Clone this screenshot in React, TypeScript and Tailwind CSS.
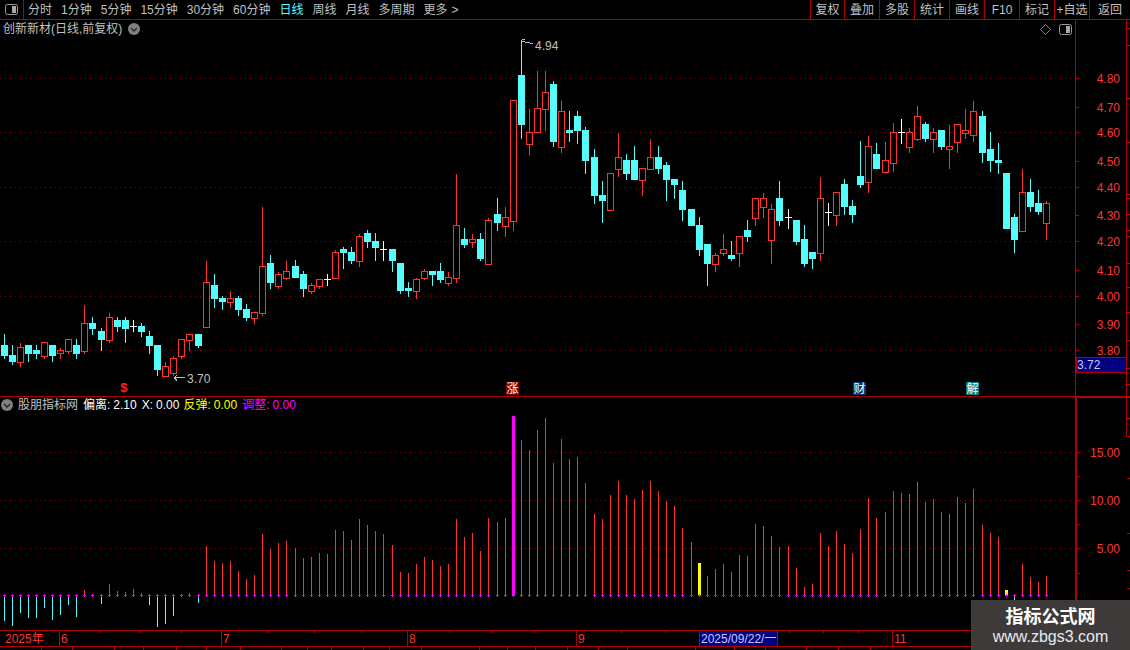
const RED = '#ff3232';
const LINE = '#b00000';
const CYAN = '#55fcfc';

const JUMPS = [12, 24, 36, 48, 61, 73, 85, 97, 109, 121];
const barX = (i: number) => 4 + 8 * i + JUMPS.filter((j) => j <= i).length;

type Candle = [string, number, number, number, number];

// read from 3x crops: kind, wick top, body top, body bottom, wick bottom
const rows: { base: number; data: Candle[] }[] = [
  {
    base: 200,
    data: [
      ['c', 402, 435, 465, 473], ['c', 435, 465, 483, 492], ['r', 430, 441, 485, 498], ['c', 435, 435, 459, 483],
      ['c', 435, 450, 459, 474], ['r', 426, 426, 468, 474], ['c', 435, 435, 465, 483], ['r', 444, 450, 460, 474],
      ['r', 417, 417, 452, 458], ['c', 417, 435, 459, 474], ['r', 315, 369, 453, 459], ['c', 351, 369, 384, 402],
      ['c', 384, 393, 417, 450], ['r', 339, 351, 420, 426], ['c', 351, 360, 378, 393], ['c', 351, 360, 384, 426],
      ['w', 360, 378, 378, 393], ['c', 369, 378, 393, 408], ['c', 393, 408, 435, 459], ['c', 435, 435, 507, 525],
      ['r', 486, 498, 528, 528], ['r', 468, 474, 519, 525], ['r', 417, 417, 468, 474], ['r', 402, 402, 420, 450],
      ['c', 402, 402, 435, 441], ['r', 183, 246, 381, 381], ['c', 222, 255, 294, 321], ['c', 288, 294, 303, 327],
      ['r', 273, 294, 306, 321], ['c', 288, 294, 327, 345], ['c', 312, 327, 351, 360], ['r', 336, 336, 354, 369],
      ['r', 21, 198, 339, 345], ['c', 165, 189, 246, 264], ['r', 216, 222, 258, 264],
    ],
  },
  {
    base: 120,
    data: [
      ['r', 423, 453, 474, 477], ['c', 420, 438, 471, 471], ['c', 453, 462, 504, 528], ['r', 489, 495, 513, 519],
      ['r', 477, 477, 498, 504], ['w', 462, 477, 477, 495], ['r', 390, 396, 474, 474], ['c', 381, 387, 396, 444],
      ['c', 381, 396, 420, 429], ['r', 342, 348, 423, 438], ['c', 330, 339, 363, 381], ['c', 339, 363, 381, 420],
      ['w', 363, 387, 387, 420], ['c', 387, 387, 420, 453], ['c', 429, 429, 510, 519], ['c', 486, 504, 510, 528],
      ['r', 474, 477, 513, 534], ['r', 447, 453, 474, 477], ['c', 453, 453, 462, 495], ['c', 429, 453, 477, 486],
      ['r', 456, 471, 489, 495], ['r', 162, 315, 474, 486], ['c', 324, 357, 372, 381], ['r', 342, 357, 366, 381],
      ['c', 339, 357, 414, 420], ['r', 294, 300, 432, 432], ['c', 234, 282, 306, 330], ['r', 261, 291, 318, 348],
    ],
  },
  {
    base: 30,
    data: [
      ['r', 211, 211, 573, 600], ['c', 30, 135, 282, 324], ['r', 237, 306, 342, 372], ['r', 123, 234, 307, 307],
      ['r', 123, 186, 237, 300], ['c', 153, 162, 333, 348], ['r', 213, 243, 351, 366], ['c', 243, 300, 306, 333],
      ['c', 243, 258, 300, 339], ['c', 291, 300, 390, 429], ['c', 357, 381, 495, 519], ['c', 453, 495, 510, 576],
      ['r', 429, 429, 540, 540], ['r', 309, 381, 417, 438], ['c', 372, 390, 429, 447], ['c', 348, 390, 447, 447],
      ['r', 414, 414, 450, 495], ['r', 327, 381, 417, 417], ['c', 348, 381, 414, 429], ['c', 396, 405, 447, 510],
      ['c', 447, 447, 462, 504], ['c', 453, 480, 537, 570], ['c', 537, 537, 585, 585], ['c', 561, 585, 657, 675],
      ['c', 642, 642, 699, 765], ['r', 669, 675, 702, 723], ['r', 612, 657, 668, 675], ['c', 633, 675, 684, 690],
      ['r', 618, 618, 668, 708], ['c', 570, 600, 618, 633], ['r', 504, 504, 564, 585], ['r', 489, 504, 531, 561],
      ['r', 522, 537, 630, 699], ['c', 453, 504, 570, 585],
    ],
  },
  {
    base: 90,
    data: [
      ['w', 357, 381, 381, 414], ['c', 390, 390, 453, 462], ['c', 405, 447, 519, 528], ['c', 486, 486, 504, 534],
      ['r', 261, 324, 488, 510], ['w', 339, 365, 365, 405], ['r', 306, 306, 375, 405], ['c', 267, 282, 348, 372],
      ['c', 330, 348, 372, 396], ['c', 153, 258, 282, 291], ['r', 138, 168, 275, 306], ['c', 159, 192, 234, 234],
      ['r', 156, 210, 246, 246], ['r', 99, 126, 218, 243], ['w', 87, 127, 127, 159], ['r', 114, 126, 170, 186],
      ['r', 48, 78, 147, 150], ['c', 96, 102, 144, 153], ['r', 114, 126, 147, 186], ['c', 120, 120, 168, 177],
      ['r', 105, 168, 178, 234], ['r', 102, 102, 156, 186], ['r', 57, 120, 129, 144], ['r', 33, 63, 136, 153],
      ['c', 63, 78, 186, 216], ['c', 126, 177, 210, 243], ['c', 159, 210, 216, 249], ['c', 249, 249, 414, 414],
      ['c', 372, 381, 447, 486], ['r', 237, 306, 422, 423], ['c', 267, 306, 348, 363], ['c', 300, 339, 363, 372],
      ['r', 333, 339, 399, 447],
    ],
  },
];

const candles = rows.flatMap(({ base, data }) =>
  data.map(([kind, a, b, c, d]) => ({
    kind,
    wickTop: Math.round(base + a / 3),
    top: Math.round(base + b / 3),
    bottom: Math.round(base + c / 3),
    wickBottom: Math.round(base + d / 3),
  })),
);

// indicator: y of each bar's tip, 0 = no bar
const tipZ = [
  720, 735, 696, 711, 711, 681, 717, 702, 672, 708, 630, 0, 669, 612, 633, 636, 627, 639, 672, 738, 729, 705, 0, 640,
  666, 498, 543, 549, 543, 573, 597, 585, 462, 507, 489, 483, 504, 534, 531, 519, 522, 450, 453,
  480, 417, 435, 453, 462, 495, 576, 579, 552, 531, 540, 558, 552, 417, 471, 459, 513, 414, 426, 414, 108, 180, 210,
  150, 114, 249, 177, 237, 231, 309, 402, 417, 345, 303, 345, 357, 330, 303, 333, 363, 378, 444, 486, 549, 588, 567,
  552, 576, 525, 528,
];
const tipZ2 = [
  552, 558, 588, 621, 618, 684, 741, 732, 579, 618, 573, 612, 639, 567, 474, 534, 516, 453, 459, 462, 426, 486, 477,
  516, 522, 471, 489, 447, 555, 579, 591, 750, 800, 672, 711, 726, 708,
];
const BASE = 595;
const tips = [...tipZ.map((z) => (z ? Math.round(380 + z / 3) : BASE)), ...tipZ2.map((z) => Math.round(340 + z / 3))];

const priceGrid = [78, 132, 187, 241, 296, 350];
const priceLabels: [string, number][] = [
  ['4.80', 78], ['4.70', 107], ['4.60', 132], ['4.50', 161], ['4.40', 187], ['4.30', 215],
  ['4.20', 241], ['4.10', 270], ['4.00', 296], ['3.90', 324], ['3.80', 350],
];
const sideTicks = [28, 45, 98, 142, 194, 198, 214, 230, 236, 263, 287, 312, 340, 368, 384];
const volLabels: [string, number][] = [['15.00', 452], ['10.00', 500], ['5.00', 548]];
const volTicks = [476, 524, 573];
const volSideTicks = [478, 533, 570, 588, 612];

const leftTabs = ['分时', '1分钟', '5分钟', '15分钟', '30分钟', '60分钟', '日线', '周线', '月线', '多周期'];
const rightTabs: [string, string][] = [
  ['复权', 'w-[34px]'], ['叠加', 'w-[35px]'], ['多股', 'w-[35px]'], ['统计', 'w-[35px]'], ['画线', 'w-[35px]'],
  ['F10', 'w-[35px]'], ['标记', 'w-[35px]'], ['+自选', 'w-[35px]'], ['返回', 'w-[41px]'],
];
const timeTicks = [100, 140, 181, 268, 314, 361, 449, 492, 534, 621, 665, 789, 823, 858];
const tabEdges = [42, 73, 115, 144, 177, 207, 241, 282, 308, 332, 364, 390, 422, 480, 508, 536, 568, 599, 628, 696, 735, 766, 807, 839, 871, 1130];

const PanelIcon = () => (
  <svg width="13" height="11" viewBox="0 0 13 11">
    <rect x="0.5" y="0.5" width="12" height="10" rx="2" fill="none" stroke="#9a9a9a" />
    <rect x="7" y="2" width="4" height="7" fill="#a8a8a8" />
  </svg>
);

const Chevron = () => (
  <svg width="12" height="12" viewBox="0 0 12 12">
    <circle cx="6" cy="6" r="6" fill="#808080" />
    <path d="M3 5l3 3 3-3" fill="none" stroke="#222" strokeWidth="1.3" />
  </svg>
);

const Grid = ({ ys }: { ys: number[] }) => (
  <>
    {ys.map((y) => (
      <line key={y} x1="0" x2="1075" y1={y + 0.5} y2={y + 0.5} stroke="#900000" strokeDasharray="1 4" />
    ))}
  </>
);

const Marker = ({ label, bg, left }: { label: string; bg: string; left: string }) => (
  <span className={`absolute bottom-[1px] flex h-[13px] w-[13px] items-center justify-center text-[12px] leading-none text-white ${bg} ${left}`}>
    {label}
  </span>
);

const PriceChart = () => (
  <svg width="1075" height="358" viewBox="0 38 1075 358" shapeRendering="crispEdges" fontSize="12">
    <Grid ys={priceGrid} />
    {candles.map((c, i) => {
      const x = barX(i);
      const color = c.kind === 'c' ? CYAN : c.kind === 'r' ? RED : '#ffffff';
      return (
        <g key={i}>
          <rect x={x} y={c.wickTop} width="1" height={c.wickBottom - c.wickTop + 1} fill={color} />
          {c.kind === 'c' && <rect x={x - 3} y={c.top} width="7" height={c.bottom - c.top + 1} fill={color} />}
          {c.kind === 'r' && (
            <rect x={x - 2.5} y={c.top + 0.5} width="6" height={c.bottom - c.top} fill="#000" stroke={color} />
          )}
          {c.kind === 'w' && <rect x={x - 3} y={c.top} width="7" height="1" fill={color} />}
        </g>
      );
    })}
    <g fill="#c0c0c0">
      <path d="M521.5 39.5h3M521.5 39.5v5M521.5 41.5h3M525 42h3l2 1h3" fill="none" stroke="#c0c0c0" />
      <text x="535" y="50">4.94</text>
      <path d="M174 377.5h11M174 377.5l3-2M174 377.5l3 3" fill="none" stroke="#c0c0c0" />
      <text x="187" y="383">3.70</text>
    </g>
  </svg>
);

const IndicatorChart = () => (
  <svg width="1075" height="217" viewBox="0 413 1075 217" shapeRendering="crispEdges">
    <Grid ys={[452, 500, 548]} />
    {tips.map((tip, i) => {
      const x = barX(i);
      const thick = i === 63 || i === 86 || i === 124;
      const fill = i === 63 ? '#ff00ff' : thick ? '#ffff00' : tip > BASE ? CYAN : RED;
      const top = Math.min(tip, BASE);
      const h = Math.abs(tip - BASE) + 1;
      return (
        <g key={i}>
          <rect x={thick ? x - 1 : x} y={top} width={thick ? 3 : 1} height={h} fill={fill} />
          <rect x={x - 1} y={BASE} width="3" height="1" fill="#ff00ff" />
          <rect x={x} y={BASE - 1} width="1" height="3" fill="#ff00ff" />
        </g>
      );
    })}
  </svg>
);

export default function App() {
  return (
    <div className="relative flex h-[650px] w-[1130px] flex-col overflow-hidden bg-black text-[12px] leading-none text-[#c0c0c0] font-['Liberation_Sans','Noto_Sans_CJK_SC',sans-serif]">
      {/* toolbar */}
      <div className="flex h-[20px] shrink-0 items-stretch border-b border-[#b00000]">
        <div className="flex w-[24px] items-center justify-center border-r border-[#b00000]">
          <PanelIcon />
        </div>
        <div className="flex items-center gap-[9px] pl-[4px]">
          {leftTabs.map((t) => (
            <span key={t} className={t === '日线' ? 'text-[#55ffff]' : ''}>{t}</span>
          ))}
          <span className="flex gap-[4px]">更多<span>&gt;</span></span>
        </div>
        <div className="ml-auto flex">
          {rightTabs.map(([t, w]) => (
            <div key={t} className={`flex items-center justify-center border-l border-[#b00000] ${w}`}>{t}</div>
          ))}
        </div>
      </div>

      {/* price panel */}
      <div className="flex h-[377px] shrink-0 border-b border-[#b00000]">
        <div className="relative flex w-[1075px] flex-col">
          <div className="flex h-[18px] shrink-0 items-center justify-between pl-[3px] pr-[3px]">
            <div className="flex items-center gap-[6px]">
              <span>创新新材(日线,前复权)</span>
              <Chevron />
            </div>
            <div className="flex items-center gap-[8px]">
              <svg width="11" height="11" viewBox="0 0 11 11">
                <path d="M5.5 0.5l5 5-5 5-5-5z" fill="none" stroke="#808080" />
              </svg>
              <PanelIcon />
            </div>
          </div>
          <PriceChart />
          <span className="absolute bottom-[1px] left-[120px] text-[13px] font-bold text-[#ff2020] font-['Liberation_Mono',monospace]">$</span>
          <Marker label="涨" bg="bg-[#800000]" left="left-[506px]" />
          <Marker label="财" bg="bg-[#003a70]" left="left-[853px]" />
          <Marker label="解" bg="bg-[#008080]" left="left-[966px]" />
        </div>
        <div className="w-[55px] border-l border-[#b00000]">
          <svg width="54" height="376" viewBox="1076 20 54 376" shapeRendering="crispEdges" fontSize="12">
            <rect x="1126" y="20" width="1" height="376" fill={LINE} />
            {sideTicks.map((y) => (
              <rect key={y} x="1127" y={y} width="3" height="1" fill={LINE} />
            ))}
            {priceLabels.map(([label, y]) => (
              <g key={label}>
                <rect x="1076" y={y} width="3" height="1" fill={LINE} />
                <text x="1120" y={y + 4.5} textAnchor="end" fill={RED} shapeRendering="auto">{label}</text>
              </g>
            ))}
            <rect x="1076" y="357" width="50" height="15" fill="#000080" stroke={LINE} />
            <text x="1077" y="369" fill="#c8c8ff">3.72</text>
          </svg>
        </div>
      </div>

      {/* indicator panel */}
      <div className="flex h-[233px] shrink-0">
        <div className="flex w-[1075px] flex-col">
          <div className="flex h-[16px] shrink-0 items-center pl-[1px]">
            <Chevron />
            <span className="ml-[5px]">股朋指标网</span>
            <span className="ml-[5px] flex gap-[3px] text-white"><span>偏离:</span><span>2.10</span></span>
            <span className="ml-[5px] flex gap-[3px] text-white"><span>X:</span><span>0.00</span></span>
            <span className="ml-[4px] flex gap-[3px] text-[#ffff00]"><span>反弹:</span><span>0.00</span></span>
            <span className="ml-[5px] flex gap-[3px] text-[#ff00ff]"><span>调整:</span><span>0.00</span></span>
          </div>
          <IndicatorChart />
        </div>
        <div className="w-[55px] border-l-2 border-t border-[#b00000]">
          <svg width="53" height="232" viewBox="1077 398 53 232" shapeRendering="crispEdges" fontSize="12">
            <rect x="1126" y="398" width="1" height="39" fill={LINE} />
            <rect x="1126" y="418" width="4" height="1" fill={LINE} />
            <rect x="1126" y="436" width="4" height="1" fill={LINE} />
            {volSideTicks.map((y) => (
              <rect key={y} x="1127" y={y} width="3" height="1" fill={LINE} />
            ))}
            {volTicks.map((y) => (
              <rect key={y} x="1077" y={y} width="3" height="1" fill={LINE} />
            ))}
            {volLabels.map(([label, y]) => (
              <g key={label}>
                <rect x="1077" y={y} width="4" height="1" fill={LINE} />
                <text x="1120" y={y + 4.5} textAnchor="end" fill={RED} shapeRendering="auto">{label}</text>
              </g>
            ))}
          </svg>
        </div>
      </div>

      {/* time axis */}
      <div className="relative flex h-[17px] shrink-0 border-y border-[#b00000] text-[#ff3232]">
        <div className="flex w-[59px] items-center pl-[5px]">2025年</div>
        <div className="flex w-[162px] items-center border-l border-[#b00000] pl-[1px]">6</div>
        <div className="flex w-[186px] items-center border-l border-[#b00000] pl-[1px]">7</div>
        <div className="flex w-[169px] items-center border-l border-[#b00000] pl-[1px]">8</div>
        <div className="flex w-[123px] items-center border-l border-[#b00000] pl-[1px]">9</div>
        <div className="flex w-[79px] items-center border-x border-[#b00000] bg-[#000080] pl-[1px] text-[#c8c8ff]">2025/09/22/一</div>
        <div className="w-[114px]" />
        <div className="flex flex-1 items-center border-l border-[#b00000] pl-[1px]">11</div>
        <svg className="absolute left-0 top-0" width="900" height="3" shapeRendering="crispEdges">
          {timeTicks.map((x) => (
            <rect key={x} x={x} y="0" width="1" height="2" fill={LINE} />
          ))}
        </svg>
      </div>

      {/* tab strip, only its top edge is in frame */}
      <div className="flex flex-1">
        {tabEdges.map((edge, i) => (
          <div
            key={edge}
            className="h-full border-r border-[#b00000] last:border-r-0"
            style={{ width: edge - (i ? tabEdges[i - 1] : 0) }}
          />
        ))}
      </div>

      {/* site watermark */}
      <div className="absolute bottom-0 right-0 flex h-[50px] w-[159px] flex-col items-center justify-center gap-[5px] bg-[#3e3a39]">
        <span className="text-[18px] font-bold text-white font-['Noto_Sans_CJK_SC',sans-serif]">指标公式网</span>
        <span className="text-[16px] text-[#e4ecf6]">www.zbgs3.com</span>
      </div>
    </div>
  );
}
